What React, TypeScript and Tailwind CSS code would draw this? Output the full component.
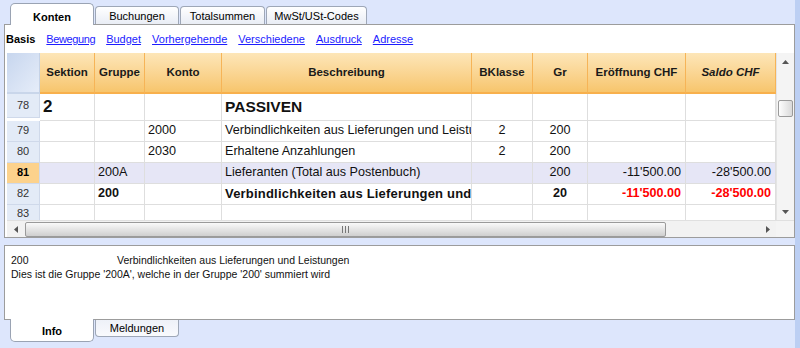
import React from "react";

const cols = "grid-cols-[33px_55px_50px_77px_250px_61px_55px_98px_90px]";

type Row = {
  n: string;
  h: string;
  sek?: string;
  grp?: string;
  konto?: string;
  desc?: string;
  bk?: string;
  gr?: string;
  er?: string;
  sal?: string;
  kind?: "title" | "sel" | "bold" | "plain";
};

const rows: Row[] = [
  { n: "78", h: "h-[24px]", sek: "2", desc: "PASSIVEN", kind: "title" },
  { n: "79", h: "h-[21px]", konto: "2000", desc: "Verbindlichkeiten aus Lieferungen und Leistungen", bk: "2", gr: "200", kind: "plain" },
  { n: "80", h: "h-[21px]", konto: "2030", desc: "Erhaltene Anzahlungen", bk: "2", gr: "200", kind: "plain" },
  { n: "81", h: "h-[21px]", grp: "200A", desc: "Lieferanten (Total aus Postenbuch)", gr: "200", er: "-11'500.00", sal: "-28'500.00", kind: "sel" },
  { n: "82", h: "h-[21px]", grp: "200", desc: "Verbindlichkeiten aus Lieferungen und Leistungen", gr: "20", er: "-11'500.00", sal: "-28'500.00", kind: "bold" },
  { n: "83", h: "h-[18px]", kind: "plain" },
];

function Cell({ children, align, extra }: { children?: React.ReactNode; align: "l" | "c" | "r"; extra?: string }) {
  const a = align === "l" ? "justify-start pl-[3px]" : align === "c" ? "justify-center" : "justify-end pr-[4px]";
  return (
    <div className={`flex items-center overflow-hidden whitespace-nowrap border-r border-b border-[#dedede] ${a} ${extra ?? ""}`}>
      {children}
    </div>
  );
}

function HeadCell({ label, italic }: { label: string; italic?: boolean }) {
  return (
    <div className={`flex items-center justify-center border-r border-[#f6b457] border-b-2 border-b-[#f8b04c] bg-gradient-to-b from-[#fde6b8] to-[#f7c56c] text-[11.5px] font-bold text-[#1a1a1a] whitespace-nowrap overflow-hidden ${italic ? "italic" : ""}`}>
      {label}
    </div>
  );
}

function Grid() {
  return (
    <div className={`grid ${cols} w-[769px] text-[12.6px]`}>
      <div className="h-[41px] bg-gradient-to-br from-[#c7d6ee] to-[#e6edf9] border-r border-[#c5d2e6] border-b-2 border-b-[#c9d6ea]" />
      <HeadCell label="Sektion" />
      <HeadCell label="Gruppe" />
      <HeadCell label="Konto" />
      <HeadCell label="Beschreibung" />
      <HeadCell label="BKlasse" />
      <HeadCell label="Gr" />
      <HeadCell label="Eröffnung CHF" />
      <HeadCell label="Saldo CHF" italic />
      {rows.map((r) => {
        const sel = r.kind === "sel";
        const bold = r.kind === "bold";
        const bg = sel ? "bg-[#e6e6f6]" : "bg-white";
        const w = bold ? "font-bold" : "";
        return (
          <React.Fragment key={r.n}>
            <div
              className={`${r.h} flex items-center justify-center border-r border-b border-[#cfd9ea] text-[11px] ${
                sel ? "bg-[#fcd28c] font-bold text-black" : "bg-[#e3ebf7] text-[#333]"
              }`}
            >
              {r.n}
            </div>
            <Cell align="l" extra={`${bg} text-[17px] font-bold`}>{r.sek}</Cell>
            <Cell align="l" extra={`${bg} ${w}`}>{r.grp}</Cell>
            <Cell align="l" extra={`${bg}`}>{r.konto}</Cell>
            <Cell align="l" extra={`${bg} ${bold ? "font-bold text-[13px] tracking-[0.2px]" : ""} ${r.kind === "title" ? "text-[15.5px] font-bold" : ""}`}>{r.desc}</Cell>
            <Cell align="c" extra={`${bg}`}>{r.bk}</Cell>
            <Cell align="c" extra={`${bg} ${w}`}>{r.gr}</Cell>
            <Cell align="r" extra={`${bg} ${bold ? "font-bold text-[#ff0000]" : ""}`}>{r.er}</Cell>
            <Cell align="r" extra={`${bg} ${bold ? "font-bold text-[#ff0000]" : ""}`}>{r.sal}</Cell>
          </React.Fragment>
        );
      })}
    </div>
  );
}

function TopTab({ label, w, active }: { label: string; w: string; active?: boolean }) {
  if (active) {
    return (
      <div className={`${w} relative z-10 -mb-px h-[22px] flex items-start justify-center pt-[5px] bg-white border border-b-0 border-[#9aa3b3] rounded-t-[5px] text-[11px] font-bold text-black`}>
        {label}
      </div>
    );
  }
  return (
    <div className={`${w} h-[18px] flex items-center justify-center pt-[1px] bg-gradient-to-b from-[#ffffff] to-[#e9edf5] border border-b-0 border-[#9ea7b7] rounded-t-[4px] text-[11px] text-black`}>
      {label}
    </div>
  );
}

export default function App() {
  return (
    <div className="w-[800px] h-[348px] flex bg-[#dde6fc] font-['Liberation_Sans',Arial,sans-serif] text-[13px] text-[#111] overflow-hidden">
      <div className="w-[795px] flex flex-col pl-[4px]">
        {/* top tabs */}
        <div className="h-[24px] flex items-end gap-[1px] pl-[6px]">
          <TopTab label="Konten" w="w-[84px]" active />
          <TopTab label="Buchungen" w="w-[84px]" />
          <TopTab label="Totalsummen" w="w-[85px]" />
          <TopTab label="MwSt/USt-Codes" w="w-[101px]" />
        </div>
        {/* main panel */}
        <div className="h-[214px] border border-[#9c9c9c] bg-white flex flex-col">
          <div className="h-[28px] flex items-center gap-[11px] pl-[1px] text-[11px]">
            <span className="font-bold text-black">Basis</span>
            <span className="text-[#1c1cff] underline tracking-[-0.4px]">Bewegung</span>
            <span className="text-[#1c1cff] underline">Budget</span>
            <span className="text-[#1c1cff] underline">Vorhergehende</span>
            <span className="text-[#1c1cff] underline">Verschiedene</span>
            <span className="text-[#1c1cff] underline">Ausdruck</span>
            <span className="text-[#1c1cff] underline">Adresse</span>
          </div>
          <div className="ml-[2px] flex flex-col">
            <div className="flex h-[167px]">
              <div className="w-[769px] overflow-hidden">
                <Grid />
              </div>
              {/* vertical scrollbar */}
              <div className="w-[18px] bg-[#f4f4f4] border-l border-[#e4e4e4] flex flex-col items-center">
                <div className="h-[17px] w-full flex items-center justify-center">
                  <svg width="7" height="4" viewBox="0 0 7 4"><path d="M0 4 L3.5 0 L7 4 Z" fill="#555" /></svg>
                </div>
                <div className="mt-[30px] h-[17px] w-[15px] rounded-[2px] border border-[#9a9a9a] bg-gradient-to-r from-[#fdfdfd] to-[#d9d9d9]" />
                <div className="flex-1" />
                <div className="h-[17px] w-full flex items-center justify-center">
                  <svg width="7" height="4" viewBox="0 0 7 4"><path d="M0 0 L3.5 4 L7 0 Z" fill="#555" /></svg>
                </div>
              </div>
            </div>
            {/* horizontal scrollbar */}
            <div className="h-[17px] flex">
              <div className="w-[769px] bg-[#f2f2f2] flex items-center border-t border-[#e0e0e0]">
                <div className="w-[17px] flex items-center justify-center">
                  <svg width="4" height="7" viewBox="0 0 4 7"><path d="M4 0 L0 3.5 L4 7 Z" fill="#555" /></svg>
                </div>
                <div className="ml-[1px] w-[641px] h-[15px] rounded-[2px] border border-[#9a9a9a] bg-gradient-to-b from-[#fafafa] to-[#cfcfcf] flex items-center justify-center">
                  <svg width="7" height="7" viewBox="0 0 7 7">
                    <path d="M0.5 0 V7 M3.5 0 V7 M6.5 0 V7" stroke="#777" strokeWidth="1" />
                  </svg>
                </div>
                <div className="flex-1" />
                <div className="w-[17px] flex items-center justify-center">
                  <svg width="4" height="7" viewBox="0 0 4 7"><path d="M0 0 L4 3.5 L0 7 Z" fill="#555" /></svg>
                </div>
              </div>
              <div className="w-[18px] bg-[#f4f4f4] border-t border-[#e0e0e0]" />
            </div>
          </div>
        </div>
        {/* info panel */}
        <div className="mt-[7px] h-[75px] border border-[#9c9c9c] bg-white pl-[6px] pt-[7px] text-[10.5px] leading-[14px] text-[#111]">
          <div className="flex">
            <span className="w-[106px]">200</span>
            <span>Verbindlichkeiten aus Lieferungen und Leistungen</span>
          </div>
          <div>Dies ist die Gruppe '200A', welche in der Gruppe '200' summiert wird</div>
        </div>
        {/* bottom tabs */}
        <div className="flex items-start gap-[1px] pl-[6px]">
          <div className="relative z-10 -mt-px w-[84px] h-[23px] flex items-center justify-center pt-[2px] bg-white border border-t-0 border-[#9aa3b3] rounded-b-[5px] text-[11px] font-bold text-black">
            Info
          </div>
          <div className="w-[84px] h-[17px] flex items-center justify-center bg-gradient-to-b from-[#eef1f8] to-[#f9fafd] border border-t-0 border-[#9ea7b7] rounded-b-[4px] text-[11px] text-black">
            Meldungen
          </div>
        </div>
      </div>
      <div className="w-[5px] bg-[#bccff3]" />
    </div>
  );
}
